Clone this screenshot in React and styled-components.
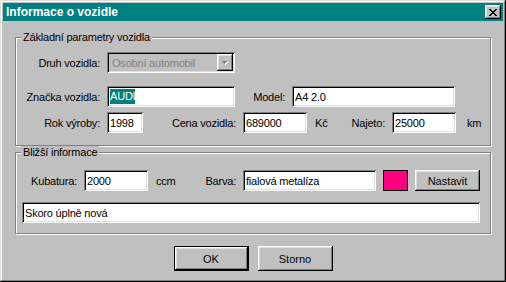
import React from 'react';
import styled, { createGlobalStyle, css } from 'styled-components';

const GlobalStyle = createGlobalStyle`
  html, body {
    margin: 0;
    padding: 0;
    background: #c0c0c0;
  }

  body {
    font-family: 'Liberation Sans', Arial, sans-serif;
    font-size: 11px;
    letter-spacing: -0.2px;
    color: #000;
  }
`;

const raised = css`
  box-shadow: inset -1px -1px #000, inset 1px 1px #fff, inset -2px -2px #808080,
    inset 2px 2px #dfdfdf;
`;

const sunken = css`
  box-shadow: inset 1px 1px #808080, inset -1px -1px #fff, inset 2px 2px #000,
    inset -2px -2px #dfdfdf;
`;

const Window = styled.div`
  width: 506px;
  height: 282px;
  box-sizing: border-box;
  padding: 3px;
  display: flex;
  flex-direction: column;
  background: #c0c0c0;
  box-shadow: inset -1px -1px #000, inset 1px 1px #dfdfdf, inset -2px -2px #808080,
    inset 2px 2px #fff;
`;

const TitleBar = styled.div`
  height: 18px;
  display: flex;
  align-items: center;
  justify-content: space-between;
  padding: 0 2px 0 3px;
  background: #008080;
`;

const Title = styled.span`
  color: #fff;
  font-size: 12px;
  font-weight: bold;
  letter-spacing: 0;
`;

const CloseButton = styled.button`
  width: 16px;
  height: 14px;
  padding: 0;
  border: 0;
  display: flex;
  align-items: center;
  justify-content: center;
  background: #c0c0c0;
  ${raised};
`;

const Body = styled.div`
  flex: 1;
  display: flex;
  flex-direction: column;
  padding: 10px 12px 0;
`;

const Group = styled.fieldset`
  margin: ${(p) => p.$mt || 0}px 0 0;
  padding: ${(p) => p.$pt}px 0 ${(p) => p.$pb}px;
  min-width: 0;
  border: 1px solid #808080;
  box-shadow: 1px 1px 0 #fff, inset 1px 1px 0 #fff;
  display: flex;
  flex-direction: column;
`;

const Legend = styled.legend`
  margin-left: 5px;
  padding: 0 2px;
  line-height: 13px;
  background: #c0c0c0;
`;

const Row = styled.div`
  height: 21px;
  display: flex;
  align-items: center;
  margin-top: ${(p) => p.$mt || 0}px;
  padding-left: ${(p) => p.$pl || 0}px;
`;

const Label = styled.span`
  width: ${(p) => p.$w}px;
  box-sizing: border-box;
  flex-shrink: 0;
  padding-right: 7px;
  text-align: right;
  white-space: nowrap;
`;

const Unit = styled.span`
  width: ${(p) => p.$w}px;
  box-sizing: border-box;
  flex-shrink: 0;
  padding-left: ${(p) => p.$pl}px;
  white-space: nowrap;
`;

const TextBox = styled.div`
  width: ${(p) => p.$w}px;
  height: 21px;
  box-sizing: border-box;
  flex-shrink: 0;
  display: flex;
  align-items: center;
  padding: 0 2px 0 3px;
  overflow: hidden;
  white-space: nowrap;
  background: #fff;
  ${sunken};
`;

const Selected = styled.span`
  padding: 1px 0;
  line-height: 13px;
  color: #fff;
  background: #008080;
`;

const Combo = styled.div`
  width: ${(p) => p.$w}px;
  height: 21px;
  box-sizing: border-box;
  flex-shrink: 0;
  display: flex;
  align-items: center;
  justify-content: space-between;
  padding: 2px 2px 2px 5px;
  background: #c0c0c0;
  color: #808080;
  ${sunken};
`;

const DropButton = styled.div`
  width: 16px;
  height: 17px;
  display: flex;
  align-items: center;
  justify-content: center;
  background: #c0c0c0;
  ${raised};
`;

const Swatch = styled.div`
  width: 25px;
  height: 21px;
  box-sizing: border-box;
  flex-shrink: 0;
  margin-left: 7px;
  border: 1px solid #000;
  background: ${(p) => p.$color};
`;

const Button = styled.button`
  width: ${(p) => p.$w}px;
  height: ${(p) => p.$h}px;
  box-sizing: border-box;
  flex-shrink: 0;
  margin-left: ${(p) => p.$ml || 0}px;
  padding: 0;
  border: ${(p) => (p.$default ? '1px solid #000' : '0')};
  font: inherit;
  color: #000;
  background: #c0c0c0;
  ${raised};
`;

const ButtonRow = styled.div`
  display: flex;
  justify-content: center;
  gap: 9px;
  margin-top: 12px;
`;

const xPixels = [
  [0, 1, 6, 7],
  [1, 2, 5, 6],
  [2, 3, 4, 5],
  [3, 4],
  [2, 3, 4, 5],
  [1, 2, 5, 6],
  [0, 1, 6, 7],
];

const CloseGlyph = () => (
  <svg width="8" height="7" viewBox="0 0 8 7" shapeRendering="crispEdges">
    {xPixels.map((cols, y) =>
      cols.map((x) => <rect key={`${x}-${y}`} x={x} y={y} width="1" height="1" fill="#000" />)
    )}
  </svg>
);

const ArrowGlyph = () => (
  <svg width="6" height="4" viewBox="0 0 6 4" shapeRendering="crispEdges">
    <rect x="1" y="1" width="5" height="1" fill="#fff" />
    <rect x="2" y="2" width="3" height="1" fill="#fff" />
    <rect x="3" y="3" width="1" height="1" fill="#fff" />
    <rect x="0" y="0" width="5" height="1" fill="#808080" />
    <rect x="1" y="1" width="3" height="1" fill="#808080" />
    <rect x="2" y="2" width="1" height="1" fill="#808080" />
  </svg>
);

const App = () => (
  <>
    <GlobalStyle />
    <Window>
      <TitleBar>
        <Title>Informace o vozidle</Title>
        <CloseButton aria-label="Zavřít">
          <CloseGlyph />
        </CloseButton>
      </TitleBar>

      <Body>
        <Group $pt={8} $pb={12}>
          <Legend>Základní parametry vozidla</Legend>
          <Row>
            <Label $w={91}>Druh vozidla:</Label>
            <Combo $w={128}>
              <span>Osobní automobil</span>
              <DropButton>
                <ArrowGlyph />
              </DropButton>
            </Combo>
          </Row>
          <Row $mt={13}>
            <Label $w={91}>Značka vozidla:</Label>
            <TextBox $w={128}>
              <Selected>AUDI</Selected>
            </TextBox>
            <Label $w={57}>Model:</Label>
            <TextBox $w={163}>A4 2.0</TextBox>
          </Row>
          <Row $mt={5}>
            <Label $w={91}>Rok výroby:</Label>
            <TextBox $w={36}>1998</TextBox>
            <Label $w={100}>Cena vozidla:</Label>
            <TextBox $w={64}>689000</TextBox>
            <Unit $w={40} $pl={8}>
              Kč
            </Unit>
            <Label $w={45}>Najeto:</Label>
            <TextBox $w={64}>25000</TextBox>
            <Unit $w={30} $pl={11}>
              km
            </Unit>
          </Row>
        </Group>

        <Group $mt={0} $pt={11} $pb={10}>
          <Legend>Bližší informace</Legend>
          <Row>
            <Label $w={68}>Kubatura:</Label>
            <TextBox $w={64}>2000</TextBox>
            <Unit $w={40} $pl={8}>
              ccm
            </Unit>
            <Label $w={55}>Barva:</Label>
            <TextBox $w={133}>fialová metalíza</TextBox>
            <Swatch $color="#ff0080" />
            <Button $w={65} $h={21} $ml={7}>
              Nastavit
            </Button>
          </Row>
          <Row $mt={11} $pl={6}>
            <TextBox $w={458}>Skoro úplně nová</TextBox>
          </Row>
        </Group>

        <ButtonRow>
          <Button $w={75} $h={25} $default>
            OK
          </Button>
          <Button $w={75} $h={25}>
            Storno
          </Button>
        </ButtonRow>
      </Body>
    </Window>
  </>
);

export default App;
